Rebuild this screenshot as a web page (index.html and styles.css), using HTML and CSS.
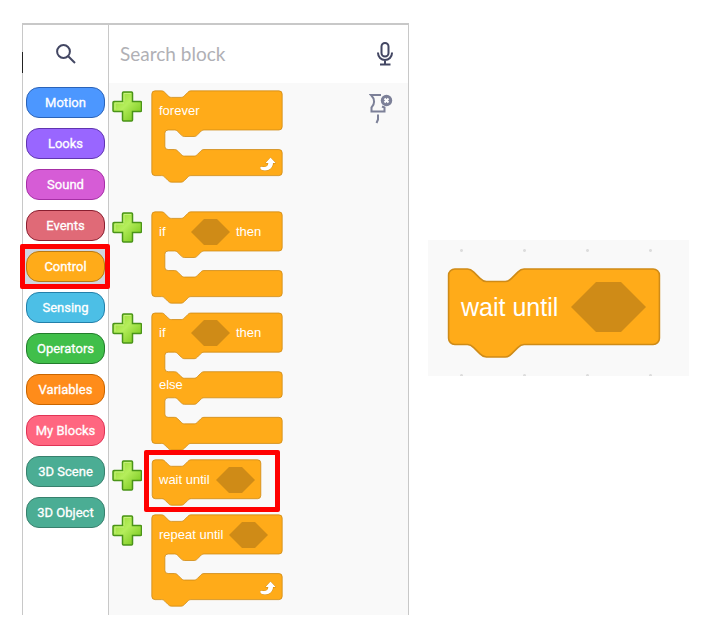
FILE: index.html
```html
<!DOCTYPE html>
<html lang="en">
<head>
<meta charset="utf-8">
<title>Block palette</title>
<link rel="stylesheet" href="styles.css">
</head>
<body>
<svg class="defs" aria-hidden="true">
  <defs>
    <linearGradient id="green" x1="0" y1="0" x2="1" y2="1">
      <stop offset="0" stop-color="#8fd62a"/>
      <stop offset=".45" stop-color="#b5ee5c"/>
      <stop offset="1" stop-color="#6cc010"/>
    </linearGradient>
    <symbol id="plus" viewBox="0 0 30 31">
      <path d="M11.500 1h8q1 0 1 1v8.500h8q1 0 1 1v8q0 1-1 1h-8v8.500q0 1-1 1h-8q-1 0-1-1v-8.500h-8.500q-1 0-1-1v-8q0-1 1-1h8.500V2q0-1 1-1z" fill="url(#green)" stroke="#4a9418" stroke-width="1.500"/>
      <path d="M12 10.500V2.500h7M3 18.500v-6.500h9" fill="none" stroke="#c4f07c" stroke-width="1"/>
    </symbol>
    <symbol id="hex" viewBox="0 0 48 32">
      <path d="M16 0H32L48 16L32 32H16L0 16z" fill="#cf8b17"/>
    </symbol>
    <symbol id="loop" viewBox="0 0 16 14">
      <path d="M10.500 .500L15.700 6H13C13 10.500 9.500 13.500 5 13.500 2.500 13.500 .800 12.500.3 11.200 0 10 1 9.500 2 9.800 5.500 10.800 8.300 9.300 8.300 6H5.500z" fill="#fff" stroke="#cf8b17" stroke-width="1" paint-order="stroke"/>
    </symbol>
    <symbol id="stack" viewBox="-1 -1 136 58">
      <path class="shape" d="M0 4A4 4 0 0 1 4 0H12c2 0 3 1 4 2l4 4c1 1 2 2 4 2h12c2 0 3-1 4-2l4-4c1-1 2-2 4-2H130a4 4 0 0 1 4 4v40a4 4 0 0 1-4 4H48c-2 0-3 1-4 2l-4 4c-1 1-2 2-4 2h-12c-2 0-3-1-4-2l-4-4c-1-1-2-2-4-2H4a4 4 0 0 1-4-4z"/>
    </symbol>
    <symbol id="wrap" viewBox="-1 -1 162 114">
      <path class="shape" d="M0 4A4 4 0 0 1 4 0H12c2 0 3 1 4 2l4 4c1 1 2 2 4 2h12c2 0 3-1 4-2l4-4c1-1 2-2 4-2H156a4 4 0 0 1 4 4v40a4 4 0 0 1-4 4H64c-2 0-3 1-4 2l-4 4c-1 1-2 2-4 2h-12c-2 0-3-1-4-2l-4-4c-1-1-2-2-4-2h-8a4 4 0 0 0-4 4v16a4 4 0 0 0 4 4h8c2 0 3 1 4 2l4 4c1 1 2 2 4 2h12c2 0 3-1 4-2l4-4c1-1 2-2 4-2H156a4 4 0 0 1 4 4v24a4 4 0 0 1-4 4H48c-2 0-3 1-4 2l-4 4c-1 1-2 2-4 2h-12c-2 0-3-1-4-2l-4-4c-1-1-2-2-4-2H4a4 4 0 0 1-4-4z"/>
    </symbol>
    <symbol id="wrap2" viewBox="-1 -1 162 170">
      <path class="shape" d="M0 4A4 4 0 0 1 4 0H12c2 0 3 1 4 2l4 4c1 1 2 2 4 2h12c2 0 3-1 4-2l4-4c1-1 2-2 4-2H156a4 4 0 0 1 4 4v40a4 4 0 0 1-4 4H64c-2 0-3 1-4 2l-4 4c-1 1-2 2-4 2h-12c-2 0-3-1-4-2l-4-4c-1-1-2-2-4-2h-8a4 4 0 0 0-4 4v16a4 4 0 0 0 4 4h8c2 0 3 1 4 2l4 4c1 1 2 2 4 2h12c2 0 3-1 4-2l4-4c1-1 2-2 4-2H156a4 4 0 0 1 4 4v24a4 4 0 0 1-4 4H64c-2 0-3 1-4 2l-4 4c-1 1-2 2-4 2h-12c-2 0-3-1-4-2l-4-4c-1-1-2-2-4-2h-8a4 4 0 0 0-4 4v16a4 4 0 0 0 4 4h8c2 0 3 1 4 2l4 4c1 1 2 2 4 2h12c2 0 3-1 4-2l4-4c1-1 2-2 4-2H156a4 4 0 0 1 4 4v24a4 4 0 0 1-4 4H48c-2 0-3 1-4 2l-4 4c-1 1-2 2-4 2h-12c-2 0-3-1-4-2l-4-4c-1-1-2-2-4-2H4a4 4 0 0 1-4-4z"/>
    </symbol>
  </defs>
</svg>
<main class="page">
  <section class="palette">
    <div class="search-side">
      <label for="search" aria-label="Search">
        <svg class="search-icon" viewBox="0 0 20 20"><circle cx="7.500" cy="7.500" r="6.400"/><path d="M12.200 12.200L19 19"/></svg>
      </label>
    </div>
    <div class="search-bar">
      <input id="search" type="text" placeholder="Search block">
      <button class="plain" aria-label="Voice search">
        <svg class="mic" viewBox="0 0 16 24"><rect x="4.500" y="1" width="7" height="13.500" rx="3.500"/><path d="M1 10.500v.5a7 7 0 0 0 14 0v-.5M8 18v4.500M3 22.500h10.500"/></svg>
      </button>
    </div>
    <nav class="categories">
      <button class="cat motion">Motion</button>
      <button class="cat looks">Looks</button>
      <button class="cat sound">Sound</button>
      <button class="cat events">Events</button>
      <div class="selected"><button class="cat control">Control</button></div>
      <button class="cat sensing">Sensing</button>
      <button class="cat operators">Operators</button>
      <button class="cat variables">Variables</button>
      <button class="cat myblocks">My Blocks</button>
      <button class="cat three">3D Scene</button>
      <button class="cat three">3D Object</button>
    </nav>
    <div class="flyout">
      <div class="list">
        <div class="row spaced">
          <button class="plain" aria-label="Add forever"><svg class="plus"><use href="#plus"/></svg></button>
          <div class="block">
            <svg class="body wrap"><use href="#wrap"/></svg>
            <div class="labels"><span>forever</span></div>
            <svg class="loop"><use href="#loop"/></svg>
          </div>
        </div>
        <div class="row">
          <button class="plain" aria-label="Add if then"><svg class="plus"><use href="#plus"/></svg></button>
          <div class="block">
            <svg class="body wrap"><use href="#wrap"/></svg>
            <div class="labels wide"><span>if</span><svg class="hex"><use href="#hex"/></svg><span>then</span></div>
          </div>
        </div>
        <div class="row">
          <button class="plain" aria-label="Add if then else"><svg class="plus"><use href="#plus"/></svg></button>
          <div class="block">
            <svg class="body wrap2"><use href="#wrap2"/></svg>
            <div class="labels wide"><span>if</span><svg class="hex"><use href="#hex"/></svg><span>then</span></div>
            <div class="labels else"><span>else</span></div>
          </div>
        </div>
        <div class="row">
          <button class="plain" aria-label="Add wait until"><svg class="plus"><use href="#plus"/></svg></button>
          <div class="block marked">
            <svg class="body stack"><use href="#stack"/></svg>
            <div class="labels"><span>wait until</span><svg class="hex"><use href="#hex"/></svg></div>
          </div>
        </div>
        <div class="row">
          <button class="plain" aria-label="Add repeat until"><svg class="plus"><use href="#plus"/></svg></button>
          <div class="block">
            <svg class="body wrap"><use href="#wrap"/></svg>
            <div class="labels"><span>repeat until</span><svg class="hex"><use href="#hex"/></svg></div>
            <svg class="loop"><use href="#loop"/></svg>
          </div>
        </div>
      </div>
      <button class="plain pin-button" aria-label="Unpin palette">
        <svg class="pin" viewBox="0 0 24 31"><path class="line" d="M12 2H2C6 6 6 11 2.500 14.500V18.500H15.500V14.500L13 13.500"/><path class="line" d="M9 21.500v5l-1.500 3.500"/><circle cx="17.500" cy="7.500" r="5.700"/><path class="cross" d="M15.500 5.500l4 4M19.500 5.500l-4 4"/></svg>
      </button>
    </div>
  </section>
  <section class="workspace">
    <div class="block big">
      <svg class="body"><use href="#stack"/></svg>
      <div class="labels"><span>wait until</span><svg class="hex"><use href="#hex"/></svg></div>
    </div>
  </section>
</main>
</body>
</html>
```
FILE: styles.css
```css
* { box-sizing: border-box; }

body {
  margin: 0;
  background: #fff;
  font-family: "Liberation Sans", Arial, sans-serif;
}

svg { display: block; }
.defs { position: absolute; width: 0; height: 0; }

.page {
  display: grid;
  grid-template-columns: 387fr 261fr;
  gap: 19px;
  align-items: start;
  padding: 23px 20px 24px 22px;
}

.palette {
  position: relative;
  display: grid;
  grid-template-columns: 86px 1fr;
  grid-template-rows: 58px auto;
  border: 1px solid #c8c8c8;
  border-top-width: 2px;
  border-bottom: 0;
}

/* Dark edge beside the search icon */
.palette::before {
  content: "";
  position: absolute;
  left: -1px;
  top: 27px;
  width: 1px;
  height: 21px;
  background: #222;
}

.search-side,
.categories { border-right: 1px solid #c8c8c8; }

.search-side {
  display: flex;
  align-items: center;
  justify-content: center;
}

.search-icon {
  width: 20px;
  height: 20px;
  fill: none;
  stroke: #434763;
  stroke-width: 2;
}

.search-bar {
  display: flex;
  align-items: center;
  padding: 0 15px 0 11px;
}

.search-bar input {
  flex: 1;
  min-width: 0;
  padding: 0;
  border: 0;
  outline: 0;
  background: none;
  font: 19px/24px Lato, "Open Sans", sans-serif;
}

.search-bar input::placeholder { color: #b0b0b5; opacity: 1; }

.plain {
  flex: none;
  padding: 0;
  border: 0;
  background: none;
}

.mic {
  width: 16px;
  height: 24px;
  fill: none;
  stroke: #434763;
  stroke-width: 2;
}

.categories {
  display: flex;
  flex-direction: column;
  gap: 10px;
  padding: 4px 3px;
}

.cat {
  display: block;
  width: 100%;
  height: 31px;
  padding: 0;
  border: 1px solid;
  border-radius: 13px;
  color: #fff;
  font: 400 13px/16px Roboto, "Liberation Sans", sans-serif;
  -webkit-text-stroke: 0.3px #fff;
}

.motion { background: #4c97ff; border-color: #2a63b8; }
.looks { background: #9966ff; border-color: #6035b0; }
.sound { background: #d65cd6; border-color: #a62fa6; }
.events { background: #e06a77; border-color: #8a1f30; }
.control { background: #ffab19; border-color: #b87a12; }
.sensing { background: #4cbfe6; border-color: #2380aa; }
.operators { background: #40bf4a; border-color: #237d2c; }
.variables { background: #ff8c1a; border-color: #c96500; }
.myblocks { background: #ff6680; border-color: #e03355; }
.three { background: #4bad94; border-color: #38806d; }

.selected { position: relative; background: #d0d5df; box-shadow: 0 0 0 2px #d0d5df; }

.selected::after,
.marked::after {
  content: "";
  position: absolute;
  border: 5px solid #f00;
  border-radius: 2px;
  pointer-events: none;
}

.selected::after { inset: -7px -5px -7px -6px; }
.marked::after { inset: -9px -18px -6px -7px; }

.flyout {
  display: flex;
  justify-content: space-between;
  align-items: flex-start;
  padding: 7px 15px 8px 3px;
  background: #f9f9f9;
}

.list {
  display: flex;
  flex-direction: column;
  gap: 8px;
}

.row {
  display: flex;
  align-items: flex-start;
  gap: 9px;
}

.spaced { margin-bottom: 20px; }

.plus { width: 30px; height: 31px; margin-top: 1px; }

.block {
  position: relative;
  display: grid;
  justify-items: start;
  align-items: start;
}

.block > * { grid-area: 1 / 1; }

.shape { fill: #ffab19; stroke: #cf8b17; stroke-width: 1; }

.wrap { width: 132px; height: 93px; }
.wrap2 { width: 132px; height: 139px; }
.stack { width: 111px; height: 47px; }

.labels {
  display: flex;
  align-items: center;
  gap: 6px;
  height: 41px;
  padding-left: 8px;
  color: #fff;
  font-size: 13px;
  line-height: 16px;
  white-space: nowrap;
}

.wide span:first-child { width: 26px; }
.else { margin-top: 52px; }

.hex { width: 39px; height: 26px; }

.loop {
  width: 16px;
  height: 14px;
  place-self: end;
  margin: 0 7px 12px 0;
}

.pin-button { margin-top: 3px; }

.pin { width: 24px; height: 31px; fill: #7c8098; }
.pin .line { fill: none; stroke: #7c8098; stroke-width: 2; }
.pin .cross { fill: none; stroke: #fff; stroke-width: 2; }

.workspace {
  display: flex;
  margin-top: 217px;
  padding: 27px 19px 17px;
  background: #f9f9f9 radial-gradient(circle, #ddd 1px, transparent 2px) 2px 73px / 63px 125px;
}

.big .body { width: 214px; height: 92px; }

.big .labels {
  gap: 13px;
  height: 79px;
  padding-left: 14px;
  font-size: 25px;
  line-height: 32px;
}

.big .hex { width: 75px; height: 50px; }
```
